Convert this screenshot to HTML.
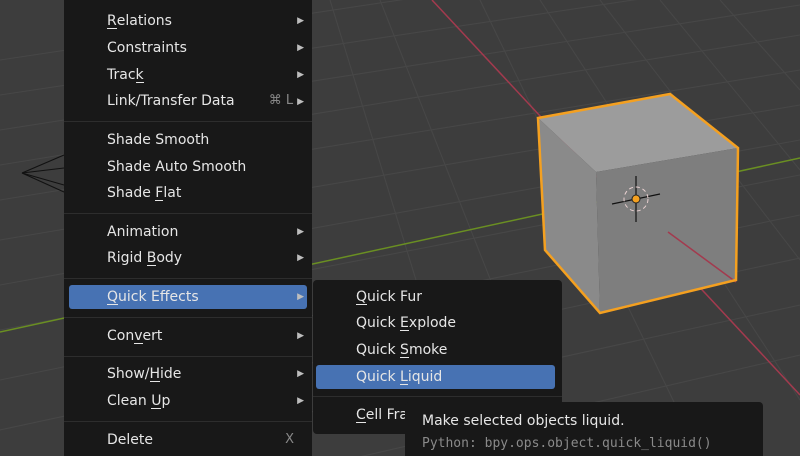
<!DOCTYPE html>
<html style="overflow:hidden"><head><meta charset="utf-8"><style>
html,body{margin:0;width:800px;height:456px;overflow:hidden}
body{position:relative;background:#3d3d3d;font-family:"DejaVu Sans","Liberation Sans",sans-serif;}
svg.bg{position:absolute;left:0;top:0}
.menu{position:absolute;background:#181818;border-radius:4px;color:#e6e6e6;font-size:14px;overflow:hidden}
.it{position:absolute;left:0;right:0;height:24px;line-height:24px}
.it span.t{position:absolute;left:43px}
.ar{position:absolute;right:8px;font-size:9px;color:#bdbdbd}
.sep{position:absolute;left:0;right:0;height:1px;background:#2d2d2d}
.hl{position:absolute;background:#4772b3;border-radius:3px}
u{text-decoration:none;border-bottom:1px solid #e6e6e6;display:inline-block;line-height:13px}
.tip{position:absolute;left:405px;top:402px;width:358px;height:54px;background:#181818;border-radius:4px 4px 0 0;overflow:hidden}
</style></head><body>
<svg class="bg" width="800" height="456">
<g stroke="#474747" stroke-width="1.1">
<line x1="0" y1="60" x2="800" y2="-60"/><line x1="0" y1="95" x2="800" y2="-25"/>
<line x1="0" y1="130" x2="800" y2="5"/><line x1="0" y1="165" x2="800" y2="35"/>
<line x1="0" y1="200" x2="800" y2="70"/><line x1="0" y1="240" x2="800" y2="105"/>
<line x1="0" y1="285" x2="800" y2="140"/><line x1="0" y1="330" x2="800" y2="175"/>
<line x1="0" y1="380" x2="800" y2="215"/><line x1="0" y1="430" x2="800" y2="258"/>
<line x1="0" y1="480" x2="800" y2="305"/><line x1="0" y1="540" x2="800" y2="355"/>
<line x1="330" y1="0" x2="470" y2="456"/><line x1="380" y1="0" x2="560" y2="456"/>
<line x1="480" y1="0" x2="700" y2="456"/><line x1="540" y1="0" x2="800" y2="400"/>
<line x1="600" y1="0" x2="800" y2="260"/><line x1="660" y1="0" x2="800" y2="170"/>
<line x1="720" y1="0" x2="800" y2="90"/>
</g>
<line x1="432" y1="0" x2="800" y2="395" stroke="#a33a4e" stroke-width="1.5"/>
<line x1="0" y1="332" x2="800" y2="158" stroke="#6a8f22" stroke-width="1.5"/>
<polygon points="538,118 670,94 738,148 596,172" fill="#9c9c9c"/>
<polygon points="538,118 596,172 600,313 545,250" fill="#8a8a8a"/>
<polygon points="596,172 738,148 736,280 600,313" fill="#7e7e7e"/>
<line x1="668" y1="232" x2="736" y2="282" stroke="#a33a4e" stroke-width="1.5"/>
<polygon points="538,118 670,94 738,148 736,280 600,313 545,250" fill="none" stroke="#f4a020" stroke-width="2.5"/>
<g stroke="#111" stroke-width="1.2"><line x1="636" y1="176" x2="636" y2="222"/><line x1="612" y1="204" x2="660" y2="194"/></g>
<circle cx="636" cy="199" r="12" fill="none" stroke="#e8d0d0" stroke-dasharray="4 3"/>
<circle cx="636" cy="199" r="4" fill="#f4a020" stroke="#222"/>
<g stroke="#111" stroke-width="1"><line x1="22" y1="173" x2="64" y2="155"/><line x1="22" y1="173" x2="64" y2="168"/><line x1="22" y1="173" x2="64" y2="185"/><line x1="22" y1="173" x2="64" y2="192"/></g>
</svg>
<div class="menu" style="left:64px;top:-6px;width:248px;height:462px;border-radius:0 0 0 0">
<div class="it" style="top:15px"><span class="t"><u>R</u>elations</span><span class="ar">▶</span></div>
<div class="it" style="top:42px"><span class="t">Constraints</span><span class="ar">▶</span></div>
<div class="it" style="top:69px"><span class="t">Trac<u>k</u></span><span class="ar">▶</span></div>
<div class="it" style="top:95px"><span class="t">Link/Transfer Data</span><span class="ar"><span style="font-size:13px;color:#888;margin-right:4px">⌘ L</span>▶</span></div>
<div class="sep" style="top:127px"></div>
<div class="it" style="top:134px"><span class="t">Shade Smooth</span></div>
<div class="it" style="top:161px"><span class="t">Shade Auto Smooth</span></div>
<div class="it" style="top:187px"><span class="t">Shade <u>F</u>lat</span></div>
<div class="sep" style="top:219px"></div>
<div class="it" style="top:226px"><span class="t">Animation</span><span class="ar">▶</span></div>
<div class="it" style="top:252px"><span class="t">Rigid <u>B</u>ody</span><span class="ar">▶</span></div>
<div class="sep" style="top:284px"></div>
<div class="hl" style="left:5px;top:291px;width:238px;height:24px"></div>
<div class="it" style="top:291px"><span class="t"><u>Q</u>uick Effects</span><span class="ar">▶</span></div>
<div class="sep" style="top:323px"></div>
<div class="it" style="top:330px"><span class="t">Con<u>v</u>ert</span><span class="ar">▶</span></div>
<div class="sep" style="top:362px"></div>
<div class="it" style="top:368px"><span class="t">Show/<u>H</u>ide</span><span class="ar">▶</span></div>
<div class="it" style="top:395px"><span class="t">Clean <u>U</u>p</span><span class="ar">▶</span></div>
<div class="sep" style="top:427px"></div>
<div class="it" style="top:434px"><span class="t">Delete</span><span class="ar" style="font-size:13px;color:#888;right:18px">X</span></div>
</div>
<div class="menu" style="left:313px;top:280px;width:249px;height:154px">
<div class="it" style="top:5px"><span class="t"><u>Q</u>uick Fur</span></div>
<div class="it" style="top:31px"><span class="t">Quick <u>E</u>xplode</span></div>
<div class="it" style="top:58px"><span class="t">Quick <u>S</u>moke</span></div>
<div class="hl" style="left:3px;top:85px;width:239px;height:24px"></div>
<div class="it" style="top:85px"><span class="t">Quick <u>L</u>iquid</span></div>
<div class="sep" style="top:116px"></div>
<div class="it" style="top:123px"><span class="t"><u>C</u>ell Fracture</span></div>
</div>
<div class="tip">
<div style="position:absolute;left:17px;top:11px;font-size:14px;color:#e6e6e6">Make selected objects liquid.</div>
<div style="position:absolute;left:17px;top:34px;font-size:13px;color:#8a8a8a;font-family:'DejaVu Sans Mono','Liberation Mono',monospace">Python: bpy.ops.object.quick_liquid()</div>
</div>
</body></html>
